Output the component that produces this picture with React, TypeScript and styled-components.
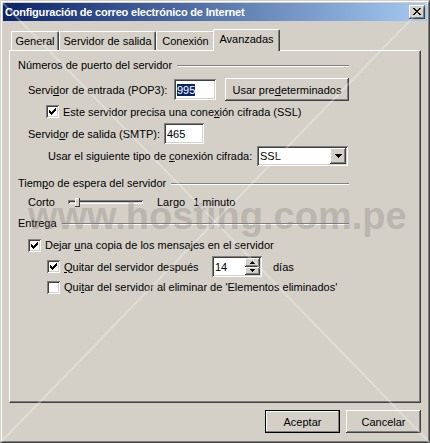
import React from 'react';
import styled, { createGlobalStyle } from 'styled-components';

const FONT = `"Liberation Sans", Arial, sans-serif`;
const FACE = '#D4D0C8';

const Global = createGlobalStyle`
  html, body { margin: 0; padding: 0; background: ${FACE}; }
  body { width: 430px; height: 443px; overflow: hidden; font-family: ${FONT}; font-size: 11px; color: #000; }
  * { box-sizing: border-box; }
`;

const raised = `inset -1px -1px #404040, inset 1px 1px #fff, inset -2px -2px #808080, inset 2px 2px ${FACE}`;
const sunken = `inset 1px 1px #808080, inset -1px -1px #fff, inset 2px 2px #404040, inset -2px -2px ${FACE}`;

const Window = styled.div`
  position: relative;
  width: 430px;
  height: 443px;
  background: ${FACE};
  padding: 3px;
  box-shadow: inset -1px -1px #404040, inset 1px 1px ${FACE}, inset -2px -2px #808080, inset 2px 2px #fff;
  display: flex;
  flex-direction: column;
  overflow: hidden;
`;

const TitleBar = styled.div`
  height: 18px;
  display: flex;
  align-items: center;
  justify-content: space-between;
  background: linear-gradient(to right, #0a246a, #a6caf0);
  padding: 0 2px 0 2px;
`;

const Title = styled.span`
  color: #fff;
  font-weight: bold;
  font-size: 11px;
  letter-spacing: -0.2px;
  white-space: nowrap;
`;

const CloseBtn = styled.div`
  width: 16px;
  height: 14px;
  background: ${FACE};
  box-shadow: ${raised};
  display: flex;
  align-items: center;
  justify-content: center;
  padding-bottom: 1px;
`;

const Body = styled.div`
  flex: 1;
  display: flex;
  flex-direction: column;
  padding: 8px 6px 0 6px;
`;

const TabStrip = styled.div`
  height: 21px;
  display: flex;
  align-items: flex-end;
  padding-left: 2px;
  position: relative;
  z-index: 1;
`;

const Tab = styled.div<{ $w: number; $active?: boolean }>`
  width: ${(p) => p.$w}px;
  height: ${(p) => (p.$active ? 22 : 19)}px;
  margin: ${(p) => (p.$active ? '0 -2px -1px -2px' : '0')};
  background: ${FACE};
  border-top: 1px solid #fff;
  border-left: 1px solid #fff;
  border-right: 1px solid #404040;
  border-top-left-radius: 2px;
  border-top-right-radius: 2px;
  box-shadow: inset -1px 0 #808080;
  display: flex;
  align-items: center;
  justify-content: center;
  padding-bottom: ${(p) => (p.$active ? 3 : 0)}px;
  white-space: nowrap;
  position: relative;
  z-index: ${(p) => (p.$active ? 2 : 1)};
`;

const Panel = styled.div`
  height: 353px;
  border-top: 1px solid #fff;
  border-left: 1px solid #fff;
  border-right: 1px solid #404040;
  border-bottom: 1px solid #404040;
  box-shadow: inset -1px -1px #808080;
  padding: 7px 0 0 8px;
  display: flex;
  flex-direction: column;
`;

const Header = styled.div<{ $mt: number }>`
  width: 331px;
  height: 14px;
  margin-top: ${(p) => p.$mt}px;
  display: flex;
  align-items: center;
  white-space: nowrap;
`;

const Etch = styled.div`
  flex: 1;
  height: 2px;
  margin-left: 5px;
  margin-top: 2px;
  border-top: 1px solid #808080;
  border-bottom: 1px solid #fff;
`;

const Row = styled.div<{ $mt: number; $h: number; $indent: number }>`
  height: ${(p) => p.$h}px;
  margin-top: ${(p) => p.$mt}px;
  margin-left: ${(p) => p.$indent}px;
  display: flex;
  align-items: center;
  white-space: nowrap;
`;

const Label = styled.span<{ $w?: number; $ml?: number }>`
  display: inline-block;
  width: ${(p) => (p.$w ? `${p.$w}px` : 'auto')};
  margin-left: ${(p) => p.$ml ?? 0}px;
  flex-shrink: 0;
`;

const Field = styled.div<{ $w: number; $h: number }>`
  width: ${(p) => p.$w}px;
  height: ${(p) => p.$h}px;
  background: #fff;
  box-shadow: ${sunken};
  display: flex;
  align-items: center;
  padding: 0 3px;
  flex-shrink: 0;
  position: relative;
`;

const Selected = styled.span`
  background: #0a246a;
  color: #fff;
`;

const Button = styled.div<{ $w: number; $default?: boolean; $ml?: number }>`
  width: ${(p) => p.$w}px;
  height: 23px;
  margin-left: ${(p) => p.$ml ?? 0}px;
  background: ${FACE};
  box-shadow: ${(p) =>
    p.$default
      ? `inset 0 0 0 1px #000, inset -2px -2px #808080, inset 2px 2px #fff, inset -3px -3px ${FACE}`
      : raised};
  display: flex;
  align-items: center;
  justify-content: center;
  flex-shrink: 0;
`;

const CheckBox = styled.div`
  width: 13px;
  height: 13px;
  background: #fff;
  box-shadow: ${sunken};
  flex-shrink: 0;
  display: flex;
  align-items: center;
  justify-content: center;
`;

const DropBtn = styled.div`
  position: absolute;
  right: 2px;
  top: 2px;
  width: 16px;
  height: 16px;
  background: ${FACE};
  box-shadow: ${raised};
  display: flex;
  align-items: center;
  justify-content: center;
`;

const SpinCol = styled.div`
  position: absolute;
  right: 2px;
  top: 2px;
  bottom: 2px;
  width: 15px;
  display: flex;
  flex-direction: column;
`;

const SpinBtn = styled.div`
  flex: 1;
  background: ${FACE};
  box-shadow: ${raised};
  display: flex;
  align-items: center;
  justify-content: center;
`;

const Track = styled.div`
  position: relative;
  width: 75px;
  height: 4px;
  margin-left: 12px;
  box-shadow: ${sunken};
  background: ${FACE};
  flex-shrink: 0;
`;

const Thumb = styled.div`
  position: absolute;
  left: 7px;
  top: -2px;
  width: 5px;
  height: 9px;
  background: ${FACE};
  box-shadow: inset -1px -1px #404040, inset 1px 1px #fff;
`;

const ButtonRow = styled.div`
  display: flex;
  justify-content: flex-end;
  gap: 6px;
  margin-top: 7px;
`;

const Watermark = styled.div`
  position: absolute;
  left: 28px;
  top: 197px;
  font-family: ${FONT};
  font-weight: bold;
  font-size: 38px;
  line-height: 38px;
  color: rgba(120, 114, 108, 0.3);
  white-space: nowrap;
  pointer-events: none;
  z-index: 5;
`;

const Lines = styled.svg`
  position: absolute;
  left: 0;
  top: 0;
  pointer-events: none;
  z-index: 6;
`;

function Pixels({ rows, color = '#000' }: { rows: string[]; color?: string }) {
  const w = rows[0].length;
  const h = rows.length;
  const rects: React.ReactNode[] = [];
  rows.forEach((r, y) =>
    r.split('').forEach((c, x) => {
      if (c === 'X') rects.push(<rect key={`${x}-${y}`} x={x} y={y} width={1} height={1} fill={color} />);
    })
  );
  return (
    <svg width={w} height={h} viewBox={`0 0 ${w} ${h}`} shapeRendering="crispEdges" style={{ display: 'block' }}>
      {rects}
    </svg>
  );
}

const CLOSE = ['XX....XX', '.XX..XX.', '..XXXX..', '...XX...', '..XXXX..', '.XX..XX.', 'XX....XX'];
const CHECK = ['......X', '.....XX', 'X...XXX', 'XX.XXX.', 'XXXXX..', '.XXX...', '..X....'];
const DOWN = ['XXXXXXX', '.XXXXX.', '..XXX..', '...X...'];
const UP_S = ['..X..', '.XXX.', 'XXXXX'];
const DOWN_S = ['XXXXX', '.XXX.', '..X..'];

const Check = ({ on }: { on?: boolean }) => <CheckBox>{on && <Pixels rows={CHECK} />}</CheckBox>;

export default function App() {
  return (
    <>
      <Global />
      <Window>
        <TitleBar>
          <Title>Configuración de correo electrónico de Internet</Title>
          <CloseBtn>
            <Pixels rows={CLOSE} />
          </CloseBtn>
        </TitleBar>
        <Body>
          <TabStrip>
            <Tab $w={48}>General</Tab>
            <Tab $w={97}>Servidor de salida</Tab>
            <Tab $w={59}>Conexión</Tab>
            <Tab $w={67} $active>
              Avanzadas
            </Tab>
          </TabStrip>
          <Panel>
            <Header $mt={0}>
              Números de puerto del servidor
              <Etch />
            </Header>
            <Row $mt={6} $h={23} $indent={10}>
              <Label $w={146}>
                Servi<u>d</u>or de entrada (POP3):
              </Label>
              <Field $w={42} $h={21}>
                <Selected>995</Selected>
              </Field>
              <Button $w={124} $ml={9}>
                Usar pre<u>d</u>eterminados
              </Button>
            </Row>
            <Row $mt={3} $h={15} $indent={28}>
              <Check on />
              <Label $ml={4}>
                Este servidor precisa una cone<u>x</u>ión cifrada (SSL)
              </Label>
            </Row>
            <Row $mt={4} $h={21} $indent={10}>
              <Label $w={136}>
                Servid<u>o</u>r de salida (SMTP):
              </Label>
              <Field $w={40} $h={21}>
                465
              </Field>
            </Row>
            <Row $mt={2} $h={20} $indent={30}>
              <Label $w={209}>
                Usar el siguiente tipo de <u>c</u>onexión cifrada:
              </Label>
              <Field $w={91} $h={20}>
                SSL
                <DropBtn>
                  <Pixels rows={DOWN} />
                </DropBtn>
              </Field>
            </Row>
            <Header $mt={10}>
              Tiem<u>p</u>o de espera del servidor
              <Etch />
            </Header>
            <Row $mt={4} $h={16} $indent={10}>
              <Label $w={28}>Corto</Label>
              <Track>
                <Thumb />
              </Track>
              <Label $ml={14}>Largo</Label>
              <Label $ml={8}>1 minuto</Label>
            </Row>
            <Header $mt={6}>
              Entrega
              <Etch />
            </Header>
            <Row $mt={8} $h={14} $indent={10}>
              <Check on />
              <Label $ml={4}>
                Dejar <u>u</u>na copia de los mensajes en el servidor
              </Label>
            </Row>
            <Row $mt={4} $h={21} $indent={29}>
              <Check on />
              <Label $w={148} $ml={4}>
                <u>Q</u>uitar del servidor después
              </Label>
              <Field $w={50} $h={21}>
                14
                <SpinCol>
                  <SpinBtn>
                    <Pixels rows={UP_S} />
                  </SpinBtn>
                  <SpinBtn>
                    <Pixels rows={DOWN_S} />
                  </SpinBtn>
                </SpinCol>
              </Field>
              <Label $ml={11}>días</Label>
            </Row>
            <Row $mt={3} $h={14} $indent={29}>
              <Check />
              <Label $ml={4}>
                Qui<u>t</u>ar del servidor al eliminar de 'Elementos eliminados'
              </Label>
            </Row>
          </Panel>
          <ButtonRow>
            <Button $w={75} $default>
              Aceptar
            </Button>
            <Button $w={75}>Cancelar</Button>
          </ButtonRow>
        </Body>
        <Watermark>www.hosting.com.pe</Watermark>
        <Lines width={430} height={443} viewBox="0 0 430 443">
          <line x1={0} y1={0} x2={430} y2={443} stroke="rgba(255,255,255,0.28)" strokeWidth={2} />
          <line x1={430} y1={0} x2={0} y2={443} stroke="rgba(255,255,255,0.28)" strokeWidth={2} />
        </Lines>
      </Window>
    </>
  );
}
